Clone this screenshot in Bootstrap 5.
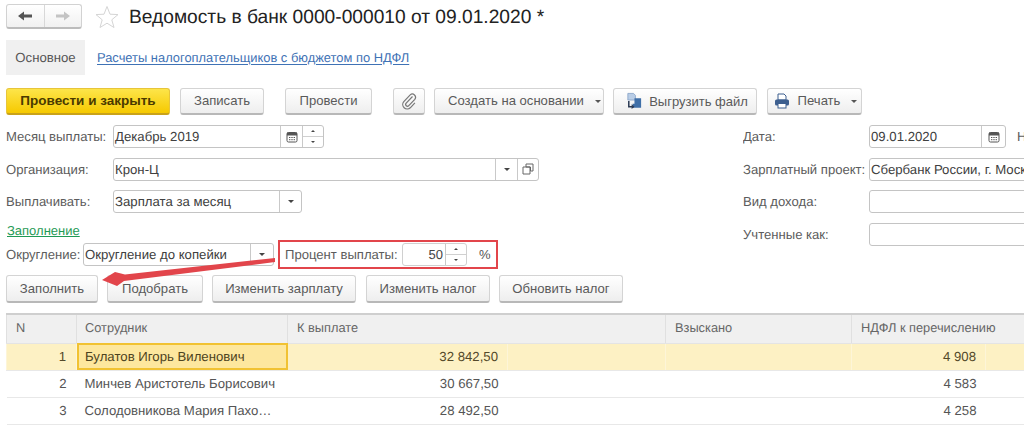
<!DOCTYPE html>
<html lang="ru">
<head>
<meta charset="utf-8">
<title>Ведомость в банк</title>
<link href="https://cdn.jsdelivr.net/npm/bootstrap@5.3.0/dist/css/bootstrap.min.css" rel="stylesheet">
<style>
html,body{height:427px;overflow:hidden;background:#fff}
body{font-family:"Liberation Sans",Arial,sans-serif;font-size:13px;color:#4d4d4d;line-height:1.2;position:relative;text-rendering:geometricPrecision}
.sheet{padding:4px 0 0 6px}
.headbar{height:25px}
.navpair{width:76px;height:25px;border:1px solid #d2d2d2;border-bottom:2px solid #bcbcbc;border-radius:3px;background:linear-gradient(#fff,#f1f1f1)}
.navpair>div{flex:1;height:100%}
.navpair>div+div{border-left:1px solid #d8d8d8}
.starbox{margin-left:13px;margin-right:10px;height:24px}
.doctitle{font-size:19.2px;color:#222;margin:0;padding-top:1px;font-weight:400;line-height:25px}
.tabrow{margin-top:11px;height:35px}
.tabcur{width:79px;height:35px;background:#f0f0f0;color:#555;font-size:13.2px}
.tablink{margin-left:12px;color:#3f72b5;font-size:12.9px;text-decoration:underline;text-underline-offset:2px}
.cmdrow{margin-top:13px;height:27px}
.cmd{height:27px;padding:0;border:1px solid #d4d4d4;border-bottom:2px solid #b8b8b8;border-radius:3px;background:linear-gradient(#fff,#eeeeee);color:#5a5a5a;font-size:13.1px;line-height:1;display:flex;align-items:center;justify-content:center;gap:8px;flex:none;--bs-btn-hover-color:#555}
.cmd-main{background:linear-gradient(#fde54a,#f6c900);border-color:#e7c53a #e7c53a #c9a21a;color:#4a3a00;font-weight:700;font-size:13.5px}
.cmd-start{justify-content:flex-start;padding-left:13px}
.cmd-export{gap:6px;padding-left:3px;font-size:13px}
.cmd-print{padding-left:2px}
.caretmini{display:inline-block;border:3px solid transparent;border-top:3px solid #555;border-bottom:0;width:0;height:0;margin-left:3px}
.formzone{margin-top:10px;height:142px}
.leftzone{width:737px;flex:none}
.rightzone{flex:1;min-width:0;overflow:hidden}
.frow{height:23px;margin-bottom:9.5px}
.lbl{flex:none;color:#5c5c5c;font-size:13.1px;padding-top:1px}
.fld{height:23px;border:1px solid #c4c4c4;border-radius:3px;background:#fff;display:flex;align-items:stretch;color:#404040;flex:none;overflow:hidden}
.fldtext{flex:1;padding:0 1px;line-height:22px;white-space:nowrap;overflow:hidden;font-size:13.2px}
.fldbtn{flex:none;border-left:1px solid #c9c9c9;display:flex;align-items:center;justify-content:center}
.spin{width:21px;flex-direction:column}
.spin>span{flex:1;width:100%;display:flex;align-items:center;justify-content:center}
.spin>span+span{border-top:1px solid #d0d0d0}
.tinyup,.tinydn{width:0;height:0;border:2.5px solid transparent}
.tinyup{border-bottom:2.5px solid #444;border-top:0}
.tinydn{border-top:2.5px solid #444;border-bottom:0}
.caretfield{border-width:3px;border-bottom:0}
.fillink{color:#1f9a55;font-size:13px;text-decoration:underline;line-height:15px;display:block;margin:0 0 0 1px;height:18.5px}
.roundrow{height:29px;margin-top:-1px}
.redbox{border:2px solid #e2454b;height:29px;width:220px;margin-left:4px;padding-left:5px;flex:none}
.redfield{height:23px;border:1px solid #d0d0d0;border-radius:3px;margin-left:4px;width:65px;display:flex;overflow:hidden;flex:none}
.redval{flex:1;text-align:right;line-height:22px;padding-right:2px;color:#444}
.pct{margin-left:12px;color:#555;padding-top:1px}
.actrow{margin-top:8px;height:28px}
.actrow .cmd{height:28px}
.gridwrap{margin-top:10px;width:1018px}
.doc-grid{table-layout:fixed;width:1018px;border-collapse:collapse;margin:0;font-size:13.2px;color:#555}
.doc-grid th{background:#f0f0f0;font-weight:400;height:29px;padding:0 0 2px 9px;border-top:2px solid #cfcfcf;border-left:1px solid #e0e0e0;border-bottom:1px solid #e4e4e4;color:#666;font-size:12.8px;vertical-align:middle;white-space:nowrap}
.doc-grid td{height:27px;padding:0 9px;border-bottom:1px solid #e8e8e8;white-space:nowrap;overflow:hidden;vertical-align:middle;color:#555}
.doc-grid th:nth-child(2),.doc-grid td:nth-child(2){padding-left:8px}
.doc-grid td:first-child{padding-right:10px}
.doc-grid .num{text-align:right}
.rowsel td{background:#fdf1c4;color:#54492a;border-left:1px solid #fdf5d8}
.doc-grid .rowsel td.cellact{background:#fde79e;outline:2px solid #f1c232;outline-offset:-2px;color:#4d4320}
.pointer{position:absolute;left:98px;top:250px;width:190px;height:42px;pointer-events:none}
</style>
</head>
<body>
<div class="sheet">
  <div class="headbar d-flex align-items-center">
    <div class="navpair d-flex">
      <div class="d-flex align-items-center justify-content-center"><svg width="16" height="12" viewBox="0 0 16 12"><path d="M1 6 7 1.5V4.6H15V7.4H7V10.5Z" fill="#555"/></svg></div>
      <div class="d-flex align-items-center justify-content-center"><svg width="16" height="12" viewBox="0 0 16 12"><path d="M15 6 9 1.5V4.6H1V7.4H9V10.5Z" fill="#c4c4c4"/></svg></div>
    </div>
    <div class="starbox"><svg width="24" height="24" viewBox="0 0 24 24"><path d="M12 1.5 15 9.2 23 9.6 16.8 14.8 19 22.5 12 18.2 5 22.5 7.2 14.8 1 9.6 9 9.2Z" fill="none" stroke="#d5d5d5" stroke-width="1"/></svg></div>
    <h1 class="doctitle">Ведомость в банк 0000-000010 от 09.01.2020 *</h1>
  </div>

  <div class="tabrow d-flex align-items-center">
    <div class="tabcur d-flex align-items-center justify-content-center">Основное</div>
    <a class="tablink" href="#">Расчеты налогоплательщиков с бюджетом по НДФЛ</a>
  </div>

  <div class="cmdrow d-flex">
    <button class="btn cmd cmd-main" style="width:164px">Провести и закрыть</button>
    <button class="btn cmd" style="width:84px;margin-left:10px">Записать</button>
    <button class="btn cmd" style="width:87px;margin-left:21px">Провести</button>
    <button class="btn cmd" style="width:32px;margin-left:21px"><svg width="16" height="18" viewBox="0 0 16 18"><path d="M11.5 4.5 5.2 11.2a1.8 1.8 0 0 0 2.6 2.5l6-6.4a3.2 3.2 0 0 0-4.6-4.4L2.8 9.6a4.5 4.5 0 0 0 6.5 6.2l4.6-4.9" fill="none" stroke="#777" stroke-width="1.2"/></svg></button>
    <button class="btn cmd cmd-start" style="width:170px;margin-left:9px">Создать на основании<span class="caretmini"></span></button>
    <button class="btn cmd cmd-export" style="width:144px;margin-left:9px"><svg width="18" height="18" viewBox="0 0 19 18"><path d="M3 1h6l2 2v5H3z" fill="#b9cde6" stroke="#7f9cc4" stroke-width=".8"/><path d="M10 6h7v10H8v-4h2z" fill="#3f6fa8"/><path d="M4 9v6h5" fill="none" stroke="#2c3b55" stroke-width="1.6"/><path d="M7 12.5 10 15l-3 2.5z" fill="#2c3b55"/></svg>Выгрузить файл</button>
    <button class="btn cmd cmd-print" style="width:95px;margin-left:10px"><svg width="16" height="16" viewBox="0 0 16 16"><path d="M4 1h6l2 2v4H4z" fill="#fff" stroke="#3d5f8f"/><rect x="1" y="6.5" width="14" height="6" rx="1.5" fill="#3d5f8f"/><rect x="4" y="10.5" width="8" height="4.5" fill="#fff" stroke="#3d5f8f"/></svg>Печать<span class="caretmini"></span></button>
  </div>

  <div class="formzone d-flex">
    <div class="leftzone">
      <div class="frow d-flex align-items-center">
        <div class="lbl" style="width:107px">Месяц выплаты:</div>
        <div class="fld" style="width:211px">
          <div class="fldtext">Декабрь 2019</div>
          <div class="fldbtn" style="width:22px"><svg width="12" height="12" viewBox="0 0 12 12"><rect x="1" y="1.5" width="10" height="9.5" rx="1.5" fill="none" stroke="#555"/><rect x="1" y="1.5" width="10" height="3" fill="#555"/><path d="M3 6.5h1.4M5.3 6.5h1.4M7.6 6.5H9M3 8.7h1.4M5.3 8.7h1.4M7.6 8.7H9" stroke="#555"/></svg></div>
          <div class="fldbtn spin"><span><i class="tinyup"></i></span><span><i class="tinydn"></i></span></div>
        </div>
      </div>
      <div class="frow d-flex align-items-center">
        <div class="lbl" style="width:107px">Организация:</div>
        <div class="fld" style="width:426px">
          <div class="fldtext">Крон-Ц</div>
          <div class="fldbtn" style="width:22px"><i class="tinydn caretfield"></i></div>
          <div class="fldbtn" style="width:21px"><svg width="12" height="12" viewBox="0 0 12 12"><path d="M4 1h7v7H8.5V4H4zM1 4h7v7H1z" fill="none" stroke="#666"/></svg></div>
        </div>
      </div>
      <div class="frow d-flex align-items-center">
        <div class="lbl" style="width:107px">Выплачивать:</div>
        <div class="fld" style="width:189px">
          <div class="fldtext">Зарплата за месяц</div>
          <div class="fldbtn" style="width:22px"><i class="tinydn caretfield"></i></div>
        </div>
      </div>
      <a class="fillink" href="#">Заполнение</a>
      <div class="roundrow d-flex align-items-center">
        <div class="lbl" style="width:77px">Округление:</div>
        <div class="fld" style="width:191px">
          <div class="fldtext">Округление до копейки</div>
          <div class="fldbtn" style="width:23px"><i class="tinydn caretfield"></i></div>
        </div>
        <div class="redbox d-flex align-items-center">
          <div class="lbl" style="width:113px">Процент выплаты:</div>
          <div class="redfield">
            <div class="redval">50</div>
            <div class="fldbtn spin"><span><i class="tinyup"></i></span><span><i class="tinydn"></i></span></div>
          </div>
          <div class="pct">%</div>
        </div>
      </div>
    </div>
    <div class="rightzone">
      <div class="frow d-flex align-items-center">
        <div class="lbl" style="width:126px">Дата:</div>
        <div class="fld" style="width:137px">
          <div class="fldtext">09.01.2020</div>
          <div class="fldbtn" style="width:24px"><svg width="12" height="12" viewBox="0 0 12 12"><rect x="1" y="1.5" width="10" height="9.5" rx="1.5" fill="none" stroke="#555"/><rect x="1" y="1.5" width="10" height="3" fill="#555"/><path d="M3 6.5h1.4M5.3 6.5h1.4M7.6 6.5H9M3 8.7h1.4M5.3 8.7h1.4M7.6 8.7H9" stroke="#555"/></svg></div>
        </div>
        <div class="lbl" style="margin-left:11px">Н</div>
      </div>
      <div class="frow d-flex align-items-center">
        <div class="lbl" style="width:126px;white-space:nowrap">Зарплатный проект:</div>
        <div class="fld" style="width:200px"><div class="fldtext">Сбербанк России, г. Москва</div></div>
      </div>
      <div class="frow d-flex align-items-center">
        <div class="lbl" style="width:126px">Вид дохода:</div>
        <div class="fld" style="width:200px"></div>
      </div>
      <div class="frow d-flex align-items-center">
        <div class="lbl" style="width:126px">Учтенные как:</div>
        <div class="fld" style="width:200px"></div>
      </div>
    </div>
  </div>

  <div class="actrow d-flex">
    <button class="btn cmd" style="width:92px">Заполнить</button>
    <button class="btn cmd" style="width:96px;margin-left:9px">Подобрать</button>
    <button class="btn cmd" style="width:144px;margin-left:9px">Изменить зарплату</button>
    <button class="btn cmd" style="width:124px;margin-left:10px">Изменить налог</button>
    <button class="btn cmd" style="width:124px;margin-left:9px">Обновить налог</button>
  </div>

  <div class="gridwrap">
    <table class="table doc-grid">
      <colgroup><col style="width:70px"><col style="width:211px"><col style="width:220px"><col style="width:158px"><col style="width:186px"><col style="width:134px"><col style="width:39px"></colgroup>
      <thead><tr><th>N</th><th>Сотрудник</th><th colspan="2">К выплате</th><th>Взыскано</th><th colspan="2">НДФЛ к перечислению</th></tr></thead>
      <tbody>
        <tr class="rowsel"><td class="num">1</td><td class="cellact">Булатов Игорь Виленович</td><td class="num">32 842,50</td><td></td><td></td><td class="num">4 908</td><td></td></tr>
        <tr><td class="num">2</td><td>Минчев Аристотель Борисович</td><td class="num">30 667,50</td><td></td><td></td><td class="num">4 583</td><td></td></tr>
        <tr><td class="num">3</td><td>Солодовникова Мария Пахо…</td><td class="num">28 492,50</td><td></td><td></td><td class="num">4 258</td><td></td></tr>
      </tbody>
    </table>
  </div>
</div>
<svg class="pointer" viewBox="0 0 190 42"><path d="M177 8V12L26 31 19 36 4 30 17 22 27 24.5Z" fill="#e2454b"/></svg>
<script src="https://cdn.jsdelivr.net/npm/bootstrap@5.3.0/dist/js/bootstrap.bundle.min.js"></script>
</body>
</html>
